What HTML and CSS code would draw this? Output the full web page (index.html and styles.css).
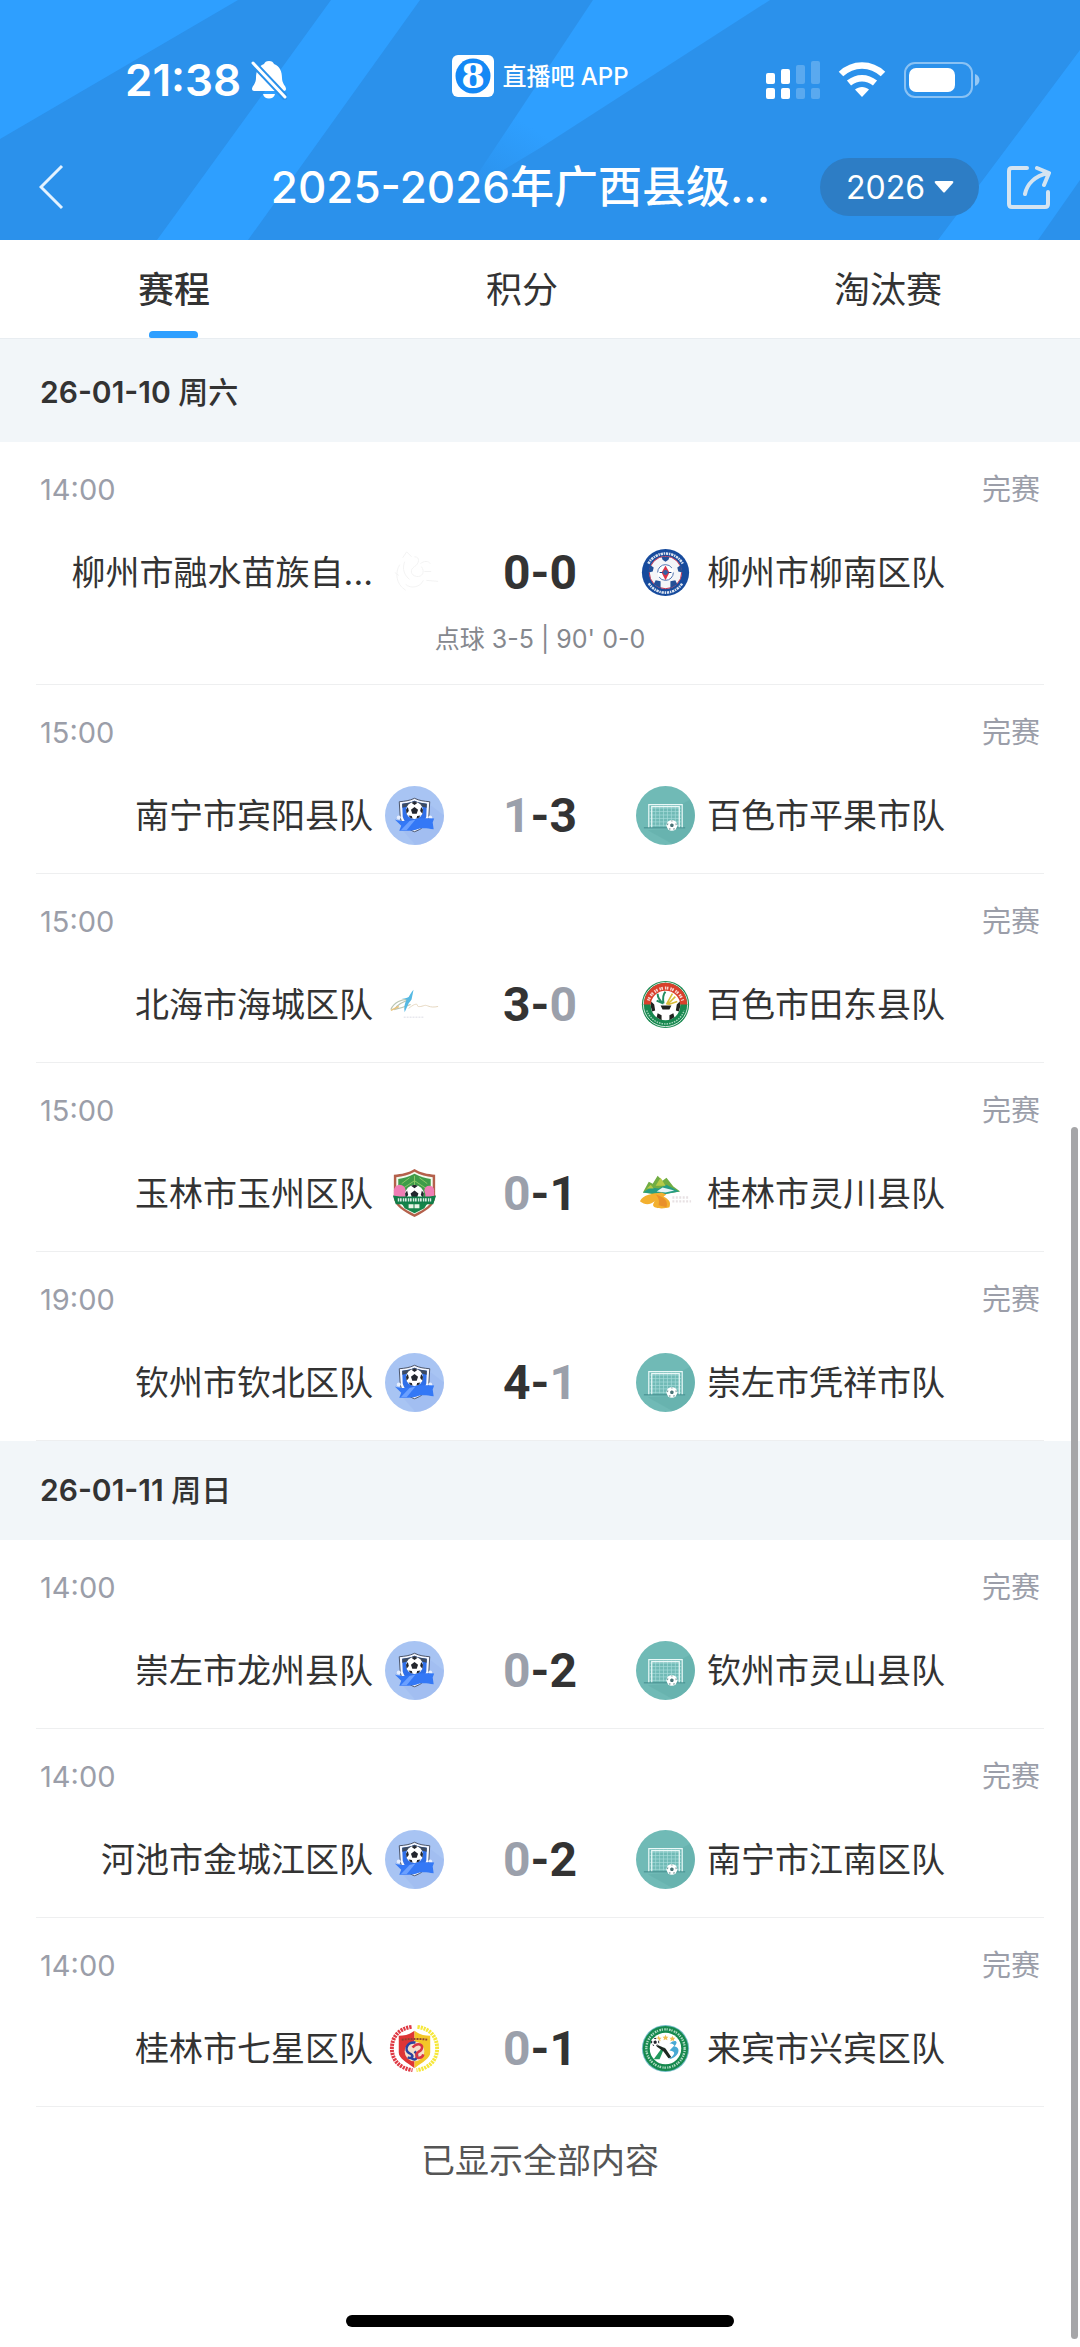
FILE: index.html
```
<!DOCTYPE html>
<html lang="zh-CN">
<head>
    <meta charset="utf-8">
    <meta name="viewport" content="width=device-width, initial-scale=1">
    <title>2025-2026年广西县级</title>
    <link rel="stylesheet" href="styles.css">
</head>
<body>
    <!-- team crests -->
    <svg class="sprite" aria-hidden="true">
        <symbol id="ball" viewBox="0 0 20 20">
            <circle cx="10" cy="10" r="9.6" fill="#fff"/>
            <path d="M10 6l4 3-1.5 4.6h-5L6 9z M10 0l3.5 1.2L10 3.600 6.500 1.200z M19.600 9l-.6 4.500-2.600-3L17.500 6z M.4 9l.6 4.500 2.600-3L2.500 6z M5.500 18.400l-2.300-2.800 3.800.4.800 3z M14.500 18.400l2.300-2.800-3.800.4-.8 3z" fill="#23262e"/>
        </symbol>
        <symbol id="home-default" viewBox="0 0 60 60">
            <circle cx="30" cy="30" r="30" fill="#a8c4f3"/>
            <path d="M18 16L30 12l12 4 18 14a30 30 0 0 1-29 30L17 44z" fill="#9fbaf0" opacity=".6"/>
            <path d="M30 12.500c5 2.500 10 3 15.500 3.500l-1 16C43 40 37 44 30 46.500 23 44 17 40 15.500 32l-1-16c5.500-.5 10.500-1 15.500-3.500z" fill="#f4f7ff" stroke="#4a5468" stroke-width="1"/>
            <path d="M30 15c4 2 8 2.600 12.500 3L42 31c-1.500 6-6 10-12 12.500C24 41 19.500 37 18 31l-.5-13c4.500-.4 8.500-1 12.500-3z" fill="#2f6fe8"/>
            <path d="M30 15c4 2 8 2.600 12.500 3l-.1 4L30 19l-12.400 3-.1-4c4.500-.4 8.500-1 12.500-3z" fill="#3c4a60"/>
            <circle cx="14" cy="32" r="2" fill="#e6eefe"/>
            <circle cx="46" cy="32" r="2" fill="#e6eefe"/>
            <use href="#ball" x="21" y="16" width="18" height="18"/>
            <path d="M10 34c6 2 13 2 20 0s14-1 20-1l-1.500 4 1 7c-7-1-12-2-18 .500-5 1.500-10 1-17 1l2-5z" fill="#3478f6"/>
            <path d="M25 35.500l6-1.500-9 11h-6z" fill="#6ba0ff"/>
        </symbol>
        <symbol id="away-default" viewBox="0 0 60 60">
            <circle cx="30" cy="30" r="30" fill="#70bab6"/>
            <path d="M47 18L55 14a30 30 0 0 1-18 45L12 45l36-2z" fill="#65b0ad" opacity=".7"/>
            <path d="M8 42.500h42" stroke="#519a99" stroke-width="1.500"/>
            <path d="M16 20v21M20 20v21M24 20v21M28 20v21M32 20v21M36 20v21M40 20v21M44 20v21M14 22.500h32M14 26h32M14 29.500h32M14 33h32M14 36.500h32M14 40h32" stroke="#a7dcda" stroke-width=".7"/>
            <path d="M13 42V19h34v23M16 42V21h28v21" fill="none" stroke="#e9f8f7" stroke-width="1.200"/>
            <circle cx="36.500" cy="40" r="5.500" fill="#fff"/>
            <path d="M36.500 38l2 1.500-.8 2.300h-2.400l-.8-2.300z M36.500 34.800l1 1h-2z M41.600 38.500l-1 1.600-.5-2z M31.400 38.500l1 1.600.5-2z M33.200 43.500l1.800-.5-.3 1.700z M39.800 43.500l-1.800-.5.3 1.700z" fill="#4a7376"/>
        </symbol>
        <symbol id="rongshui" viewBox="0 0 60 60">
            <path d="M15 22c-5 8-4 20 6 26M18 15l4-6 5 5M20 19c-3 8 0 14 5 18M30 14c6 0 5 7 0 10s-4 9 2 10 9-5 5-10M14 33l-4-3M21 42c5 5 15 3 18-4M36 21c4-3 8-3 10 0M42 38l12 1M40 29h7" fill="none" stroke="#f3f3f3" stroke-width="1"/>
        </symbol>
        <symbol id="liunan" viewBox="0 0 60 60">
            <circle cx="30" cy="30" r="24" fill="#174b9d"/>
            <path d="M12.500 21a20 20 0 0 1 35 0M13 41a20 20 0 0 0 34 0" fill="none" stroke="#fff" stroke-width="2.600" stroke-dasharray="2.400 .8 1.400 .8" opacity=".85"/>
            <circle cx="30" cy="30" r="16.500" fill="#f4f5f8" stroke="#c43352" stroke-width="1"/>
            <path d="M26 14h8l-1 3-3 2-3-2z M46 22l1 8-4-1-1-4z M14 22l-1 8 4-1 1-4z M18 42l2-4 5 1v7z M42 42l-2-4-5 1v7z" fill="#234f97"/>
            <circle cx="30" cy="30" r="8" fill="#fff" stroke="#4c70ae" stroke-width="1" stroke-dasharray="20 5"/>
            <path d="M30 23l4 7-4 8-4-8z" fill="#dc3349"/>
            <circle cx="30" cy="30" r="2.500" fill="#3360a5"/>
            <path d="M24 30h3M33 30h3" stroke="#173d86" stroke-width="1.200"/>
        </symbol>
        <symbol id="haicheng" viewBox="0 0 60 60">
            <path d="M6 35c3-7 11-11 20-10-8 2-14 5-16 10 5-1 11-3 16-5" fill="none" stroke="#b9c6b3" stroke-width="1.200"/>
            <path d="M17 24c4 0 7-1 11-4l-8 18c-1-5 0-9 2-13z M29 15l-2 10-6 8c1-8 4-13 8-18z" fill="#55b9e3"/>
            <path d="M24 34c6-5 9-5 9-3s4 1 7 0 5 3 14 1" fill="none" stroke="#e5d7c0" stroke-width="1"/>
            <path d="M6 36l8-4" stroke="#e8c37e" stroke-width="1.500"/>
            <path d="M19 43h20" stroke="#e8e8ee" stroke-width="1.500" stroke-dasharray="2 1"/>
        </symbol>
        <symbol id="tiandong" viewBox="0 0 60 60">
            <circle cx="30" cy="30" r="24" fill="#17884f"/>
            <circle cx="30" cy="30" r="22.500" fill="none" stroke="#fff" stroke-width=".8"/>
            <path d="M8 30a22 22 0 0 1 44 0z" fill="#d9402c"/>
            <path d="M12.500 26a18.400 18.400 0 0 1 35 0" fill="none" stroke="#fff" stroke-width="3" stroke-dasharray="1.400 .6 1.600 2" opacity=".8"/>
            <path d="M11 36a20 20 0 0 0 38 0" fill="none" stroke="#a2d3b9" stroke-width="1.500" stroke-dasharray="1.600 1"/>
            <circle cx="30" cy="31" r="15" fill="#fff"/>
            <path d="M25 31h11l-2 4h-7z M15.500 27l3 3 1 6-3 1-1.500-5z M44.500 27l-3 3-1 6 3 1 1.500-5z M22 39l4 2v5l-5-3z M38 39l-4 2v5l5-3z" fill="#20231f"/>
            <path d="M28 29c-4-3-6-6-6-10M28 29c-1-6 0-10 2-12M28 29l-7-3" stroke="#228c60" stroke-width="2" fill="none"/>
            <path d="M31 30l6-11M32 30l8-8M33 30l9-3" stroke="#d8bd38" stroke-width="1.600" fill="none"/>
        </symbol>
        <symbol id="yuzhou" viewBox="0 0 60 60">
            <path d="M30 5c6 4 13 5 21 6v22c0 10-10 15-21 21C19 48 9 43 9 33V11c8-1 15-2 21-6z" fill="#b4604b"/>
            <path d="M30 8c6 3.500 12 4.500 18.500 5.500V33c0 8-8 13-18.500 18-10.500-5-18.500-10-18.500-18V13.500C18 12.500 24 11.500 30 8z" fill="#f3fbef"/>
            <path d="M30 10c6 3 11 4.500 16.500 5.200V33c0 7-7 11-16.500 16-9.500-5-16.500-9-16.500-16V15.200C19 14.500 24 13 30 10z" fill="#3e9c49"/>
            <path d="M30 12v14M30 17l-12 8M30 17l12 8M25 14l-8 6M35 14l8 6" stroke="#8bc668" stroke-width="1"/>
            <circle cx="15" cy="27" r="6" fill="#ef7db5"/><circle cx="45" cy="27" r="5" fill="#ef7db5"/>
            <path d="M9 28h12v7H9z M41 28h9v7h-9z" fill="#ef7db5"/>
            <use href="#ball" x="20" y="21" width="20" height="20"/>
            <path d="M8 32l7 1h30l7-1-3 9H11z" fill="#117d48"/>
            <path d="M13 36.500h34" stroke="#fff" stroke-width="3.200" stroke-dasharray="1.400 .7 1.800 1.200" opacity=".85"/>
            <path d="M17 40h26l-3 5-10 5-10-5z" fill="#16854a"/>
            <path d="M24 43h12" stroke="#eaf5e7" stroke-width="4" stroke-dasharray="5 1"/>
        </symbol>
        <symbol id="lingchuan" viewBox="0 0 60 60">
            <path d="M7 29l6-11 4 2 5-8 5 5 4-3 7 9 7 5-13 2-12 1z" fill="#71ad43"/>
            <path d="M7 29l8-5 8 1 8-4 13 7-16 3z" fill="#279d83"/>
            <path d="M20 22l5-8 5 8z M11 25l4-4 3 4z" fill="#b6ca49"/>
            <path d="M4 38c3-7 13-8 22-9l5 2-3 2c5 3 8 5 6 11-4 1-9 2-15 0-3-2-1-4 0-6-5 4-10 4-15 0z" fill="#f3b02f"/>
            <path d="M20 31c9 3 13 6 11 13l-8-2c1-5 0-8-3-11z" fill="#e9902b"/>
            <path d="M21 28l6-4 12 3-9 2z" fill="#e6f5f8"/>
            <path d="M37 34h17M37 38h19" stroke="#e8e1e3" stroke-width="2.500" stroke-dasharray="2 1.500"/>
        </symbol>
        <symbol id="qixing" viewBox="0 0 60 60">
            <path d="M27 8C13 10 7 19 7 30s7 20 21 22" fill="none" stroke="#df3a45" stroke-width="4" stroke-dasharray="2.200 .9"/>
            <path d="M33 8c14 2 20 11 20 22s-7 20-21 22" fill="none" stroke="#f6e83b" stroke-width="4" stroke-dasharray="2.200 .9"/>
            <path d="M30 12c-5 4-10 5-16 5v17c0 6 8 10 16 16z" fill="#df3535"/>
            <path d="M30 12c5 4 10 5 16 5v17c0 6-8 10-16 16z" fill="#f4c628"/>
            <path d="M17 21c9-1 18-1 26 0" fill="none" stroke="#8e4230" stroke-width="2" stroke-dasharray="2 1"/>
            <circle cx="30" cy="33" r="10" fill="#f6dfc8"/>
            <path d="M31 24c-9-1-12 8-6 11 5 2 3 6-2 4M27 40c5 4 8-3 3-7" fill="none" stroke="#2b439f" stroke-width="2.600"/>
            <path d="M28 29c5-6 12-3 9 2-2 3-5 2-5 6s6 3 7-1" fill="none" stroke="#d83644" stroke-width="2.600"/>
        </symbol>
        <symbol id="xingbin" viewBox="0 0 60 60">
            <circle cx="30" cy="30" r="24" fill="#74bdc9"/>
            <circle cx="30" cy="30" r="23" fill="#16894e"/>
            <circle cx="30" cy="30" r="19.500" fill="none" stroke="#e4f5eb" stroke-width="2.400" stroke-dasharray="1.600 .8 1.200 1.400" opacity=".75"/>
            <circle cx="30" cy="30" r="16" fill="#fff"/>
            <path d="M23 17l1 2h2l-1.500 1.500.5 2-2-1-2 1 .5-2L20 19h2z M30 16l1 2h2l-1.500 1.500.5 2-2-1-2 1 .5-2L27 18h2z M37 17l1 2h2l-1.500 1.500.5 2-2-1-2 1 .5-2L34 19h2z" fill="#f0bd50"/>
            <path d="M34 25c6-5 10-2 5 3 8 1 4 12-6 13 6-4 9-8 1-9l5-5c-2-2-3-2-5-2z" fill="#47a9d3"/>
            <path d="M18 41l8-11 3-1-5 12z" fill="#20995b"/>
            <path d="M21 26l9 4 6 9-3 1-5-7-7-5z" fill="#1e2822"/>
            <use href="#ball" x="15" y="19" width="9" height="9"/>
        </symbol>
    </svg>

    <div class="page">
        <header class="header">
            <svg class="header-bg" viewBox="0 0 1080 240" preserveAspectRatio="none" aria-hidden="true">
                <defs>
                    <linearGradient id="fade" gradientUnits="userSpaceOnUse" x1="520" y1="120" x2="475" y2="190">
                        <stop offset="0" stop-color="#2e9fff"/>
                        <stop offset="1" stop-color="#2b91eb"/>
                    </linearGradient>
                </defs>
                <path d="M0 0h238L0 139z M331 0h89L248 240h-91z M1080 50v130l-42 60H938z" fill="#2e9fff"/>
                <path d="M593 0h177L540 148l-75 45z" fill="url(#fade)"/>
            </svg>
            <div class="status">
                <div class="clock">
                    <span>21:38</span>
                    <svg width="36" height="40" viewBox="0 0 36 40" aria-hidden="true">
                        <path d="M18 1c3 0 4 1 5 3 6 2 8 8 8 14 0 6 4 8 4 11 0 1-1 2-2 2H3c-1 0-2-1-2-2 0-3 4-5 4-11 0-6 2-12 8-14 1-2 2-3 5-3z M12 34h12c-1 6-11 6-12 0z" fill="#fff"/>
                        <path d="M0 1l36 38" stroke="#2b91eb" stroke-width="7"/>
                        <path d="M2 3l32 34" stroke="#fff" stroke-width="3" stroke-linecap="round"/>
                    </svg>
                </div>
                <div class="brand">
                    <svg width="44" height="44" viewBox="0 0 44 44" aria-hidden="true">
                        <rect x="1" y="1" width="42" height="42" rx="6" fill="#fff"/>
                        <circle cx="22" cy="22" r="17.500" fill="#1488f5"/>
                        <text class="brand-mark" x="22" y="34" text-anchor="middle">8</text>
                    </svg>
                    <span class="brand-name">直播吧 APP</span>
                </div>
                <div class="signals">
                    <svg width="54" height="38" viewBox="0 0 54 38" aria-hidden="true">
                        <g fill="#fff">
                            <rect x="0" y="12" width="9" height="11" rx="2"/><rect x="15" y="8" width="9" height="15" rx="2"/>
                            <rect x="0" y="27" width="9" height="11" rx="2"/><rect x="15" y="27" width="9" height="11" rx="2"/>
                        </g>
                        <g fill="#fff" opacity=".22">
                            <rect x="30" y="4" width="9" height="19" rx="2"/><rect x="45" y="0" width="9" height="23" rx="2"/>
                            <rect x="30" y="27" width="9" height="11" rx="2"/><rect x="45" y="27" width="9" height="11" rx="2"/>
                        </g>
                    </svg>
                    <svg width="48" height="36" viewBox="0 0 48 36" aria-hidden="true">
                        <path d="M3 12c12-11.500 30-11.500 42 0M11 21c8-6.500 18-6.500 26 0" fill="none" stroke="#fff" stroke-width="6.500"/>
                        <path d="M24 35l-7-7.500c4-3.500 10-3.500 14 0z" fill="#fff"/>
                    </svg>
                    <svg width="76" height="38" viewBox="0 0 76 38" aria-hidden="true">
                        <rect x="1" y="2" width="67" height="34" rx="10" fill="none" stroke="#fff" stroke-opacity=".45" stroke-width="2"/>
                        <rect x="5" y="7" width="46" height="24" rx="7" fill="#fff"/>
                        <path d="M71 13c6 2 6 10 0 12z" fill="#fff" opacity=".5"/>
                    </svg>
                </div>
            </div>
            <nav class="nav">
                <a class="back" href="#" aria-label="返回">
                    <svg width="26" height="46" viewBox="0 0 26 46" aria-hidden="true"><path d="M23 2L2 23l21 21" fill="none" stroke="#e3f2ff" stroke-width="3"/></svg>
                </a>
                <h1 class="title">2025-2026年广西县级...</h1>
                <div class="year">
                    <select class="year-select" aria-label="年份">
                        <option>2026</option>
                    </select>
                    <svg class="year-arrow" width="20" height="14" viewBox="0 0 20 14" aria-hidden="true"><path d="M2 1h16q2 0 1 2l-8 9q-1 1-2 0L1 3Q0 1 2 1z" fill="#fff"/></svg>
                </div>
                <button class="share" type="button" aria-label="分享">
                    <svg width="44" height="44" viewBox="0 0 44 44" aria-hidden="true">
                        <path d="M20 3H5q-3 0-3 3v33q0 3 3 3h33q3 0 3-3V27M18 29C20 19 28 11 41 8M30 3l12 5-5 12" fill="none" stroke="#d4e4f1" stroke-width="4" stroke-linecap="round" stroke-linejoin="round"/>
                    </svg>
                </button>
            </nav>
        </header>

        <div class="tabs">
            <a class="tab active" href="#">赛程</a>
            <a class="tab" href="#">积分</a>
            <a class="tab" href="#">淘汰赛</a>
        </div>

        <main class="schedule">
            <h2 class="date">26-01-10 <span class="weekday">周六</span></h2>
            <div class="match">
                <div class="meta"><span>14:00</span><span>完赛</span></div>
                <div class="teams">
                    <div class="team home"><span class="name">柳州市融水苗族自...</span><svg class="crest"><use href="#rongshui"/></svg></div>
                    <div class="score"><span>0</span><span>-</span><span>0</span></div>
                    <div class="team"><svg class="crest"><use href="#liunan"/></svg><span class="name">柳州市柳南区队</span></div>
                </div>
                <div class="note">点球 3-5 | 90' 0-0</div>
            </div>
            <div class="match">
                <div class="meta"><span>15:00</span><span>完赛</span></div>
                <div class="teams">
                    <div class="team home"><span class="name">南宁市宾阳县队</span><svg class="crest"><use href="#home-default"/></svg></div>
                    <div class="score"><span class="lose">1</span><span>-</span><span>3</span></div>
                    <div class="team"><svg class="crest"><use href="#away-default"/></svg><span class="name">百色市平果市队</span></div>
                </div>
            </div>
            <div class="match">
                <div class="meta"><span>15:00</span><span>完赛</span></div>
                <div class="teams">
                    <div class="team home"><span class="name">北海市海城区队</span><svg class="crest"><use href="#haicheng"/></svg></div>
                    <div class="score"><span>3</span><span>-</span><span class="lose">0</span></div>
                    <div class="team"><svg class="crest"><use href="#tiandong"/></svg><span class="name">百色市田东县队</span></div>
                </div>
            </div>
            <div class="match">
                <div class="meta"><span>15:00</span><span>完赛</span></div>
                <div class="teams">
                    <div class="team home"><span class="name">玉林市玉州区队</span><svg class="crest"><use href="#yuzhou"/></svg></div>
                    <div class="score"><span class="lose">0</span><span>-</span><span>1</span></div>
                    <div class="team"><svg class="crest"><use href="#lingchuan"/></svg><span class="name">桂林市灵川县队</span></div>
                </div>
            </div>
            <div class="match">
                <div class="meta"><span>19:00</span><span>完赛</span></div>
                <div class="teams">
                    <div class="team home"><span class="name">钦州市钦北区队</span><svg class="crest"><use href="#home-default"/></svg></div>
                    <div class="score"><span>4</span><span>-</span><span class="lose">1</span></div>
                    <div class="team"><svg class="crest"><use href="#away-default"/></svg><span class="name">崇左市凭祥市队</span></div>
                </div>
            </div>

            <h2 class="date">26-01-11 <span class="weekday">周日</span></h2>
            <div class="match">
                <div class="meta"><span>14:00</span><span>完赛</span></div>
                <div class="teams">
                    <div class="team home"><span class="name">崇左市龙州县队</span><svg class="crest"><use href="#home-default"/></svg></div>
                    <div class="score"><span class="lose">0</span><span>-</span><span>2</span></div>
                    <div class="team"><svg class="crest"><use href="#away-default"/></svg><span class="name">钦州市灵山县队</span></div>
                </div>
            </div>
            <div class="match">
                <div class="meta"><span>14:00</span><span>完赛</span></div>
                <div class="teams">
                    <div class="team home"><span class="name">河池市金城江区队</span><svg class="crest"><use href="#home-default"/></svg></div>
                    <div class="score"><span class="lose">0</span><span>-</span><span>2</span></div>
                    <div class="team"><svg class="crest"><use href="#away-default"/></svg><span class="name">南宁市江南区队</span></div>
                </div>
            </div>
            <div class="match">
                <div class="meta"><span>14:00</span><span>完赛</span></div>
                <div class="teams">
                    <div class="team home"><span class="name">桂林市七星区队</span><svg class="crest"><use href="#qixing"/></svg></div>
                    <div class="score"><span class="lose">0</span><span>-</span><span>1</span></div>
                    <div class="team"><svg class="crest"><use href="#xingbin"/></svg><span class="name">来宾市兴宾区队</span></div>
                </div>
            </div>
        </main>
        <p class="end">已显示全部内容</p>
        <div class="home-bar"></div>
        <div class="scroll-thumb"></div>
    </div>
</body>
</html>
```
FILE: styles.css
```
* {
    box-sizing: border-box;
}
body {
    margin: 0;
    background-color: #fff;
    color: #333;
    font-family: Inter, "Noto Sans CJK SC", sans-serif;
}
a {
    color: inherit;
    text-decoration: none;
}
svg {
    display: block;
    flex: none;
}
.sprite {
    position: absolute;
    width: 0;
    height: 0;
}
.page {
    position: relative;
    display: flex;
    flex-direction: column;
    min-height: 100vh;
}

/* header */
.header {
    position: relative;
    height: 240px;
    background-color: #2b91eb;
    color: #fff;
}
.header-bg {
    position: absolute;
    inset: 0;
    width: 100%;
    height: 100%;
}
.status {
    position: relative;
    display: grid;
    grid-template-columns: 1fr auto 1fr;
    align-items: center;
    height: 134px;
    padding: 26px 100px 0;
}
.clock {
    display: flex;
    align-items: center;
    gap: 10px;
    padding-left: 25px;
    font-size: 44px;
    font-weight: 600;
}
.brand {
    display: flex;
    align-items: center;
    gap: 7px;
    padding-bottom: 8px;
    font-size: 24px;
    font-weight: 500;
}
.brand-name {
    padding-bottom: 4px;
}
.brand-mark {
    fill: #fff;
    font-family: "DejaVu Serif", serif;
    font-size: 34px;
    font-weight: bold;
}
.signals {
    display: flex;
    align-items: center;
    justify-content: flex-end;
    gap: 18px;
}
.nav {
    position: relative;
    display: flex;
    align-items: center;
    height: 106px;
    padding: 0 29px 0 39px;
}
.title {
    flex: 1;
    margin: 0 50px 0 0;
    padding-bottom: 7px;
    font-size: 44px;
    font-weight: 500;
    text-align: right;
    white-space: nowrap;
}
.year {
    position: relative;
    margin-right: 28px;
}
.year-select {
    display: block;
    width: 159px;
    height: 58px;
    padding: 0 26px;
    border: 0;
    border-radius: 29px;
    appearance: none;
    background-color: #2d7dc5;
    color: #fff;
    font-family: inherit;
    font-size: 32px;
}
.year-arrow {
    position: absolute;
    top: 22px;
    right: 25px;
    pointer-events: none;
}
.share {
    padding: 0;
    border: 0;
    background: none;
}

/* tabs */
.tabs {
    display: flex;
    justify-content: space-around;
    height: 98px;
    font-size: 36px;
}
.tab {
    display: flex;
    flex-direction: column;
    align-items: center;
    justify-content: space-between;
    line-height: 56px;
    padding-top: 22px;
}
.tab.active {
    font-weight: 500;
}
.tab.active::after {
    content: "";
    width: 49px;
    height: 7px;
    border-radius: 4px 4px 2px 2px;
    background-color: #2e9fff;
}

/* schedule */
.schedule {
    padding-top: 4px;
    border-top: 1px solid #e8edf1;
    background-color: #f2f6f9;
}
.date {
    margin: 0;
    padding: 0 40px;
    font-size: 30px;
    font-weight: 600;
    line-height: 99px;
    background-color: #f2f6f9;
}
.weekday {
    font-weight: 500;
}
.match {
    padding: 30px 40px 0;
    background-color: #fff;
}
.match::after {
    content: "";
    display: block;
    height: 1px;
    margin: 28px -4px 0;
    background-color: #eeeff0;
}
.meta {
    display: flex;
    justify-content: space-between;
    height: 36px;
    color: #9b9ea9;
    font-size: 29px;
    line-height: 36px;
}
.teams {
    display: grid;
    grid-template-columns: 1fr 192px 1fr;
    align-items: center;
    margin-top: 35px;
}
.team {
    display: flex;
    align-items: center;
    gap: 12px;
    font-size: 34px;
    line-height: 59px;
}
.home {
    justify-content: flex-end;
}
.name {
    white-space: nowrap;
}
.crest {
    width: 59px;
    height: 59px;
}
.score {
    display: flex;
    justify-content: center;
    font-family: Roboto, sans-serif;
    font-size: 48px;
    font-weight: bold;
    line-height: 59px;
}
.lose {
    color: #9ba0ab;
}
.note {
    margin-top: 20px;
    color: #85888e;
    font-size: 25px;
    line-height: 34px;
    text-align: center;
}
.end {
    margin: 28px 0 0;
    color: #555;
    font-size: 34px;
    line-height: 52px;
    text-align: center;
}
.home-bar {
    width: 36%;
    height: 12px;
    margin: auto auto 20px;
    border-radius: 6px;
    background-color: #000;
}
.scroll-thumb {
    position: absolute;
    top: 48%;
    right: 2px;
    bottom: 8px;
    width: 7px;
    border-radius: 4px;
    background-color: #a6a6a8;
}
```
